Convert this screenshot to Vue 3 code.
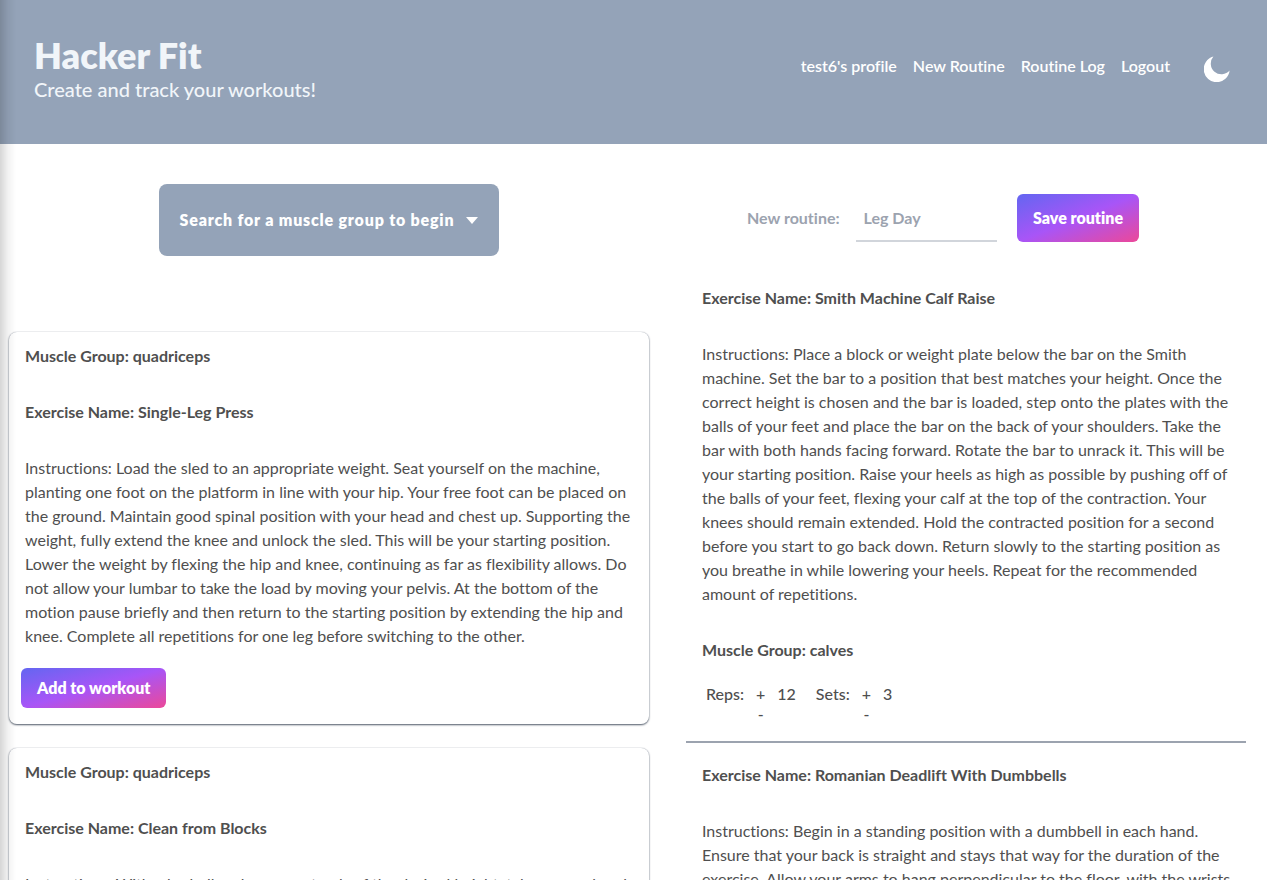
<script setup>
import { ref } from 'vue'

const links = ["test6's profile", 'New Routine', 'Routine Log', 'Logout']
const routineName = ref('')

const results = [
  {
    muscle: 'quadriceps',
    name: 'Single-Leg Press',
    text: 'Load the sled to an appropriate weight. Seat yourself on the machine, planting one foot on the platform in line with your hip. Your free foot can be placed on the ground. Maintain good spinal position with your head and chest up. Supporting the weight, fully extend the knee and unlock the sled. This will be your starting position. Lower the weight by flexing the hip and knee, continuing as far as flexibility allows. Do not allow your lumbar to take the load by moving your pelvis. At the bottom of the motion pause briefly and then return to the starting position by extending the hip and knee. Complete all repetitions for one leg before switching to the other.',
  },
  {
    muscle: 'quadriceps',
    name: 'Clean from Blocks',
    text: 'With a barbell on boxes or stands of the desired height, take an overhand or hook grip just outside the legs.',
  },
]

const routine = ref([
  {
    muscle: 'calves',
    name: 'Smith Machine Calf Raise',
    text: 'Place a block or weight plate below the bar on the Smith machine. Set the bar to a position that best matches your height. Once the correct height is chosen and the bar is loaded, step onto the plates with the balls of your feet and place the bar on the back of your shoulders. Take the bar with both hands facing forward. Rotate the bar to unrack it. This will be your starting position. Raise your heels as high as possible by pushing off of the balls of your feet, flexing your calf at the top of the contraction. Your knees should remain extended. Hold the contracted position for a second before you start to go back down. Return slowly to the starting position as you breathe in while lowering your heels. Repeat for the recommended amount of repetitions.',
    reps: 12,
    sets: 3,
  },
  {
    muscle: 'hamstrings',
    name: 'Romanian Deadlift With Dumbbells',
    text: 'Begin in a standing position with a dumbbell in each hand. Ensure that your back is straight and stays that way for the duration of the exercise. Allow your arms to hang perpendicular to the floor, with the wrists pronated and the elbows pointed to your sides.',
    reps: 12,
    sets: 3,
  },
])
</script>

<template>
  <div class="page">
    <header class="top">
      <div class="brand">
        <h1>Hacker Fit</h1>
        <p>Create and track your workouts!</p>
      </div>
      <nav>
        <a v-for="l in links" :key="l" href="#">{{ l }}</a>
        <button class="theme" type="button" aria-label="Toggle dark mode">
          <svg viewBox="0 0 26 26" width="26" height="26" aria-hidden="true">
            <path d="M9.4 0.6A13 13 0 1 0 25.6 14.6A10.6 10.6 0 0 1 9.4 0.6Z" fill="#fff" />
          </svg>
        </button>
      </nav>
    </header>

    <main>
      <section class="search">
        <button class="picker" type="button">
          <span>Search for a muscle group to begin</span>
          <svg viewBox="0 0 12 7" width="12" height="7" aria-hidden="true"><path d="M0 0H12L6 7Z" fill="#fff" /></svg>
        </button>
        <div class="cards">
          <article v-for="r in results" :key="r.name" class="card">
            <div class="copy">
              <h2>Muscle Group: {{ r.muscle }}</h2>
              <h2>Exercise Name: {{ r.name }}</h2>
              <p>Instructions: {{ r.text }}</p>
            </div>
            <button class="action" type="button">Add to workout</button>
          </article>
        </div>
      </section>

      <section class="routine">
        <form class="save" @submit.prevent>
          <label for="routine-name">New routine:</label>
          <input id="routine-name" v-model="routineName" type="text" placeholder="Leg Day" />
          <button class="action tall" type="submit">Save routine</button>
        </form>
        <article v-for="e in routine" :key="e.name" class="entry">
          <div class="copy">
            <h2>Exercise Name: {{ e.name }}</h2>
            <p>Instructions: {{ e.text }}</p>
            <h2>Muscle Group: {{ e.muscle }}</h2>
          </div>
          <div class="counts">
            <div class="count">
              <span>Reps:</span>
              <div class="steps">
                <button type="button" aria-label="More reps" @click="e.reps++">+</button>
                <button type="button" aria-label="Fewer reps" @click="e.reps--">-</button>
              </div>
              <span>{{ e.reps }}</span>
            </div>
            <div class="count">
              <span>Sets:</span>
              <div class="steps">
                <button type="button" aria-label="More sets" @click="e.sets++">+</button>
                <button type="button" aria-label="Fewer sets" @click="e.sets--">-</button>
              </div>
              <span>{{ e.sets }}</span>
            </div>
          </div>
        </article>
      </section>
    </main>
    <div class="edge"></div>
  </div>
</template>

<style>
body { margin: 0; background: #fff; }
</style>

<style scoped>
* { box-sizing: border-box; }
.page {
  position: relative;
  height: 100vh;
  overflow-y: auto;
  scrollbar-width: none;
  font-family: Lato, "Liberation Sans", sans-serif;
  font-size: 16px;
  line-height: 24px;
  font-weight: 500;
  font-variant-ligatures: no-common-ligatures;
  color: #4f4f4f;
}
h1, h2, p { margin: 0; }
h2 { font-size: 16px; line-height: 24px; font-weight: 700; }
button, input { font: inherit; }
button { border: 0; background: none; padding: 0; color: inherit; cursor: pointer; }

.edge {
  position: fixed;
  top: 0;
  bottom: 0;
  left: 0;
  width: 16px;
  pointer-events: none;
  background: linear-gradient(to right, rgba(0, 0, 0, 0.16), rgba(0, 0, 0, 0.05) 50%, rgba(0, 0, 0, 0));
}

.top {
  display: flex;
  justify-content: space-between;
  align-items: flex-start;
  min-height: 144px;
  padding: 35px 37px 36px 34px;
  background: #94a3b8;
}
.brand { color: #f1f5f9; }
h1 { font-size: 36px; line-height: 40px; font-weight: 800; }
.brand p { font-size: 20px; line-height: 28px; }
nav { display: flex; align-items: center; gap: 16px; padding-top: 17px; }
nav a { color: #fff; text-decoration: none; font-weight: 600; padding-bottom: 2px; }
.theme { display: flex; margin: 4px 0 0 18px; }

main { display: grid; grid-template-columns: minmax(0, 658fr) minmax(0, 609fr); }
.search { display: flex; flex-direction: column; align-items: center; padding: 40px 9px 0; }
.picker {
  display: flex;
  align-items: center;
  justify-content: center;
  gap: 12px;
  width: 340px;
  height: 72px;
  border-radius: 8px;
  background: #94a3b8;
  color: #fff;
  font-weight: 800;
  letter-spacing: 0.05em;
}
.cards { display: flex; flex-direction: column; gap: 24px; width: 100%; margin-top: 76px; padding-bottom: 24px; }
.card {
  padding: 12px 12px 16px;
  border-radius: 8px;
  background: #fff;
  box-shadow: 0 0 1px 0 #9ca3af, 0 1px 2px 0 #4b5563;
}
.card .copy { padding: 0 4px; }
.copy { display: flex; flex-direction: column; gap: 32px; }
.copy p { font-weight: 400; }
.action {
  height: 40px;
  padding: 0 16px;
  border-radius: 6px;
  color: #fff;
  font-weight: 800;
  background: linear-gradient(to bottom right, #6366f1, #a855f7, #ec4899);
}
.card .action { margin-top: 20px; }
.tall { height: 48px; }

.routine { padding: 50px 21px 0 28px; }
.save { display: flex; align-items: center; padding: 0 107px 0 61px; color: #9ca3af; font-weight: 700; }
.save label { flex: none; margin-right: 16px; }
.save input {
  flex: 1;
  min-width: 0;
  height: 48px;
  margin-right: 20px;
  padding: 0 8px;
  border: 0;
  border-bottom: 2px solid #d1d5db;
  background: transparent;
  color: #374151;
  outline: none;
}
.save input::placeholder { color: #9ca3af; opacity: 1; }
.save .action { flex: none; }
.entry { padding: 20px 12px 19px 16px; border-bottom: 2px solid #9ca3af; }
.save + .entry { margin-top: 24px; }
.counts { display: flex; gap: 20px; padding: 20px 4px 0; }
.count { display: flex; align-items: flex-start; gap: 12px; }
.steps { display: flex; flex-direction: column; }
.steps button { line-height: 16px; }
.steps button:first-child { line-height: 24px; }
</style>
